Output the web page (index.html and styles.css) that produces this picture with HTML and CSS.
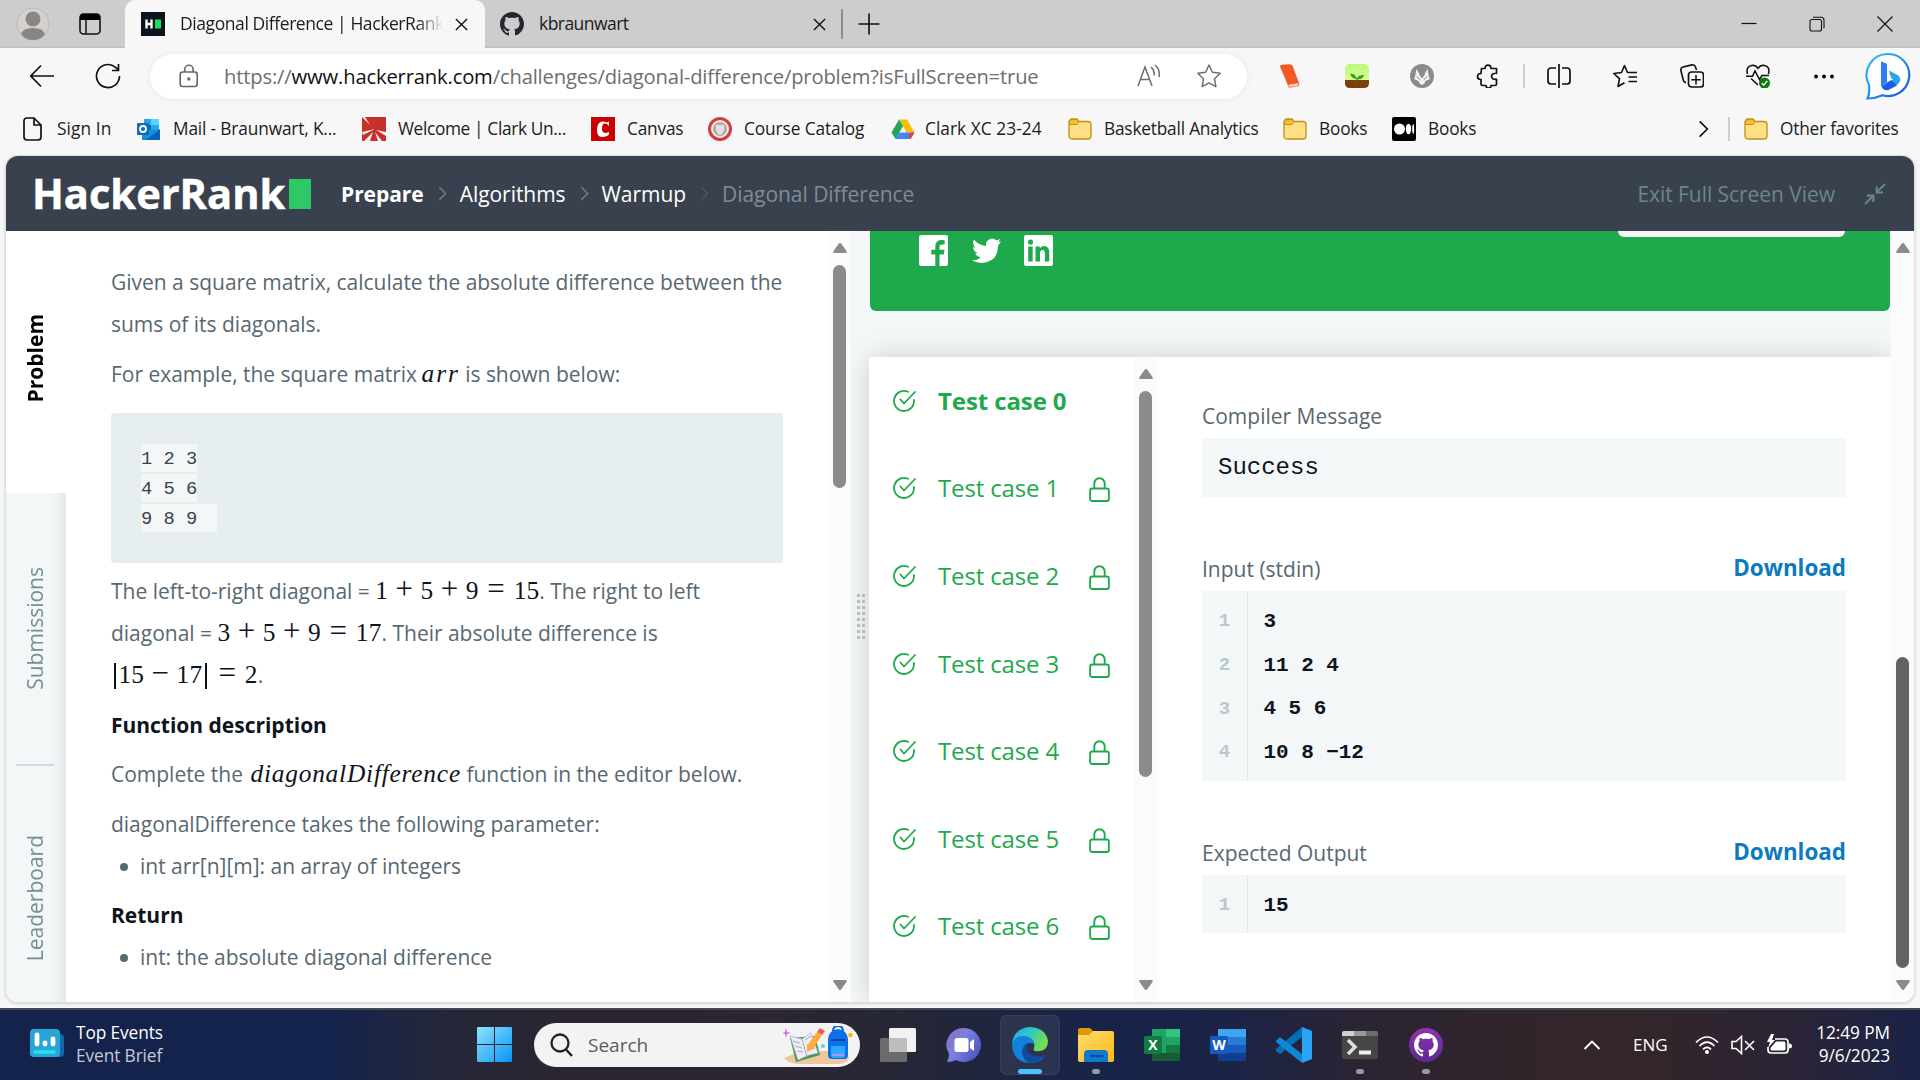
FILE: index.html
```
<!DOCTYPE html>
<html lang="en">
<head>
<meta charset="utf-8">
<title>Diagonal Difference | HackerRank</title>
<link rel="stylesheet" href="styles.css">
</head>
<body>
<svg class="defs" width="0" height="0">
  <defs>
    <symbol id="check" viewBox="0 0 24 24"><path d="M22 11v1a10 10 0 1 1-6-9.200M8.500 10.500l3.500 4L23 3" fill="none" stroke="currentColor" stroke-width="1.800" stroke-linecap="round"/></symbol>
    <symbol id="lock" viewBox="0 0 20 24"><rect x="1" y="11" width="18" height="12" rx="2" fill="none" stroke="currentColor" stroke-width="1.800"/><path d="M5 11V6.200a5 5 0 0 1 10 0V11" fill="none" stroke="currentColor" stroke-width="1.800"/></symbol>
    <symbol id="folder" viewBox="0 0 24 24"><path d="M1 5a3 3 0 0 1 3-3h5l2 2.500h9a3 3 0 0 1 3 3V19a3 3 0 0 1-3 3H4a3 3 0 0 1-3-3z" fill="#ffdf83" stroke="#c1901a" stroke-width="1.300"/><path d="M1.500 7.500V5A2.500 2.500 0 0 1 4 2.600h5l2 2L9 7.500z" fill="#f5c22e" stroke="#c1901a" stroke-width="1"/></symbol>
    <symbol id="octocat" viewBox="0 0 16 16"><path fill="currentColor" d="M8 0C3.580 0 0 3.580 0 8c0 3.540 2.290 6.530 5.470 7.590.4.070.55-.17.55-.38 0-.19-.01-.82-.01-1.490-2.010.37-2.530-.49-2.690-.94-.09-.23-.48-.94-.82-1.130-.28-.15-.68-.52-.01-.53.63-.01 1.080.58 1.230.82.72 1.210 1.870.87 2.330.66.070-.52.28-.87.51-1.070-1.780-.2-3.640-.89-3.640-3.950 0-.87.31-1.590.82-2.150-.08-.2-.36-1.020.08-2.120 0 0 .67-.21 2.200.82.64-.18 1.320-.27 2-.27s1.360.09 2 .27c1.530-1.040 2.200-.82 2.200-.82.44 1.100.16 1.920.08 2.120.51.56.82 1.270.82 2.150 0 3.070-1.870 3.750-3.650 3.950.29.25.54.73.54 1.480 0 1.070-.01 1.930-.01 2.200 0 .21.15.46.55.38A8.010 8.010 0 0 0 16 8c0-4.420-3.580-8-8-8z"/></symbol>
    <symbol id="up" viewBox="0 0 14 10"><path d="M7 0q1 0 1.500 1L13.500 8q1 2-1 2h-11q-2 0-1-2L5.500 1Q6 0 7 0z" fill="#8b8b8b"/></symbol>
    <symbol id="down" viewBox="0 0 14 10"><path d="M7 10q1 0 1.500-1L13.500 2q1-2-1-2h-11q-2 0-1 2L5.500 9Q6 10 7 10z" fill="#8b8b8b"/></symbol>
    <symbol id="close" viewBox="0 0 14 14"><path d="M1 1l12 12M13 1L1 13" stroke="#111" stroke-width="1.500" fill="none"/></symbol>
    <symbol id="gt" viewBox="0 0 10 16"><path d="M1.500 1L8.500 8l-7 7" fill="none" stroke="currentColor" stroke-width="1.500"/></symbol>
    <linearGradient id="gEdge" x1="0" y1="0" x2="1" y2="0.400"><stop offset="0" stop-color="#2fa8e8"/><stop offset=".5" stop-color="#2fc5c9"/><stop offset="1" stop-color="#6fe04c"/></linearGradient>
    <linearGradient id="gWin" x1="0" y1="0" x2="1" y2="1"><stop offset="0" stop-color="#8ae3ff"/><stop offset="1" stop-color="#0a94f5"/></linearGradient>
    <linearGradient id="gBing" x1="0" y1="0" x2="1" y2="1"><stop offset="0" stop-color="#2fc8f3"/><stop offset="1" stop-color="#1c50d8"/></linearGradient>
    <linearGradient id="gChat" x1="0" y1="0" x2="1" y2="0.600"><stop offset="0" stop-color="#8f6bb5"/><stop offset=".5" stop-color="#7a82e0"/><stop offset="1" stop-color="#4e56c4"/></linearGradient>
    <linearGradient id="gFold" x1="0" y1="0" x2="1" y2="1"><stop offset="0" stop-color="#ffdb6b"/><stop offset="1" stop-color="#fbbb17"/></linearGradient>
    <linearGradient id="gSky" x1="0" y1="0" x2="0" y2="1"><stop offset="0" stop-color="#b9f97b"/><stop offset="1" stop-color="#f0fb9c"/></linearGradient>
    <linearGradient id="gHub" x1="0" y1="0" x2="0" y2="1"><stop offset="0" stop-color="#9232b0"/><stop offset="1" stop-color="#592a90"/></linearGradient>
  </defs>
</svg>

<div class="screen">
  <header class="tabstrip">
    <div class="profile"><svg width="34" height="34" viewBox="0 0 34 34"><circle cx="17" cy="17" r="16" fill="#d4d2cd" stroke="#bcb9b4"/><circle cx="17" cy="12" r="7.500" fill="#8a8683"/><path d="M5 27q2-6 12-6t12 6q-4 6-12 6T5 27z" fill="#8a8683"/></svg></div>
    <div class="spaces"><svg width="22" height="22" viewBox="0 0 22 22"><rect x="1" y="1" width="20" height="20" rx="3.500" fill="none" stroke="#111" stroke-width="1.600"/><path d="M1 7V4q0-3 3-3h14q3 0 3 3v3z"/><path d="M7 7v14" stroke="#111" stroke-width="1.500"/></svg></div>
    <div class="tab tab-active">
      <svg width="24" height="24" viewBox="0 0 24 24"><rect width="24" height="24" fill="#0e141e"/><path d="M5.500 7.500v9M10.500 7.500v9M5 12h6" stroke="#fff" stroke-width="2.400"/><rect x="14" y="7.500" width="6" height="9" fill="#1ee25f"/></svg>
      <span class="tab-title fade">Diagonal Difference | HackerRank</span>
      <svg width="13" height="13"><use href="#close"/></svg>
    </div>
    <div class="tab tab-idle">
      <svg class="hub" width="24" height="24"><use href="#octocat"/></svg>
      <span class="tab-title">kbraunwart</span>
      <svg width="13" height="13"><use href="#close"/></svg>
    </div>
    <div class="newtab"><svg width="22" height="22" viewBox="0 0 22 22"><path d="M11 .5v21M.5 11h21" stroke="#111" stroke-width="1.600"/></svg></div>
    <div class="wincontrols">
      <svg width="16" height="16" viewBox="0 0 16 16"><path d="M.5 7.500h15" stroke="#111" stroke-width="1.200"/></svg>
      <svg width="16" height="16" viewBox="0 0 16 16"><g fill="none" stroke="#111" stroke-width="1.100"><rect x="1" y="3.500" width="11.500" height="11.500" rx="2"/><path d="M4 1.200h8q3 0 3 3v8"/></g></svg>
      <svg width="16" height="16" viewBox="0 0 16 16"><path d="M.5.5l15 15M15.500.5l-15 15" stroke="#111" stroke-width="1.200"/></svg>
    </div>
  </header>

  <nav class="toolbar">
    <svg class="tb-back" width="24" height="24" viewBox="0 0 24 24"><path d="M24 12H1M11 1.500L.8 12 11 22.500" fill="none" stroke="#111" stroke-width="1.700"/></svg>
    <svg class="tb-reload" width="26" height="26" viewBox="0 0 26 26"><path d="M24.500 13a11.500 11.500 0 1 1-4-8.700L23 6.500M23.500 1v6.500H17" fill="none" stroke="#111" stroke-width="1.700"/></svg>
    <div class="address">
      <svg width="20" height="24" viewBox="0 0 20 24"><rect x="1.200" y="8" width="17" height="14.500" rx="2.500" fill="none" stroke="#666" stroke-width="1.600"/><path d="M5.700 8V5.500a4.200 4.200 0 0 1 8.400 0V8" fill="none" stroke="#666" stroke-width="1.600"/><circle cx="9.800" cy="15" r="1.700" fill="#666"/></svg>
      <span class="url">https://<b>www.hackerrank.com</b>/challenges/diagonal-difference/problem?isFullScreen=true</span>
      <svg class="read" width="24" height="24" viewBox="0 0 24 24"><g fill="none" stroke="#6f6f6f" stroke-width="1.500"><path d="M1 22L8 3l7 19M3.700 15.500h8.800M14 3q4 3.500 3 8.500M18 1q5.500 4.500 4 12"/></g></svg>
      <svg class="star" width="26" height="26" viewBox="0 0 26 26"><path d="M13 2l3.400 7.300 7.800 1-5.700 5.500 1.400 7.900L13 19.900l-6.900 3.800 1.400-7.900L1.800 10.300l7.800-1z" fill="none" stroke="#6f6f6f" stroke-width="1.500" stroke-linejoin="round"/></svg>
    </div>
    <div class="exts">
      <svg width="24" height="24" viewBox="0 0 24 24"><path d="M1 2.500Q1 1 3 .8L11 .2q2 0 2.500 1.500L20 19 9 21.500z" fill="#f15a24"/><path d="M9 20.500l10.500-1.500.5 2.500-10 2z" fill="#ffd9c8" stroke="#f15a24" stroke-width=".7"/></svg>
      <svg width="24" height="24" viewBox="0 0 24 24"><rect width="24" height="24" rx="5" fill="url(#gSky)"/><path d="M0 16h24v3q0 5-5 5H5q-5 0-5-5z" fill="#7b3f0c"/><path d="M12 17v-3" stroke="#3d9918" stroke-width="1.400"/><path d="M12 15q-5 0-7-5 5-1 7 5zM12 15q0-4 7-4-1 5-7 4z" fill="#3fa01b"/></svg>
      <svg width="24" height="24" viewBox="0 0 24 24"><circle cx="12" cy="12" r="12" fill="#8b8b8b"/><path d="M6.500 5l3 5h5l3-5 1.500 8 1 2-4.500 2-1 2.500L12 21l-2.500-1.500-1-2.500L4 15l1-2z" fill="#f2f2f2"/><path d="M9.500 10L12 14l2.500-4zM6.500 12.500l4 3.500M17.500 12.500l-4 3.500" fill="#8b8b8b" stroke="#8b8b8b"/></svg>
      <svg width="24" height="24" viewBox="0 0 24 24"><path d="M5.500 4.500H9q0-3.300 3-3.300t3 3.300h5.500v4.800q-5-.3-5 3t5 3v4.700q0 1.500-1.500 1.500h-4q0 2.500-2.500 2.500T10 21.500H6.500Q5 21.500 5 20v-4.500q-3.500 0-3.500-3T5 9.500z" fill="none" stroke="#111" stroke-width="1.700" stroke-linejoin="round"/></svg>
    </div>
    <i class="vline"></i>
    <div class="tools">
      <svg width="24" height="24" viewBox="0 0 24 24"><path d="M9 4H4Q1 4 1 7v10q0 3 3 3h5M15 4h5q3 0 3 3v10q0 3-3 3h-5M12 0v24" fill="none" stroke="#111" stroke-width="1.700"/></svg>
      <svg width="24" height="24" viewBox="0 0 24 24"><path d="M16 8.500h-1.500L11.500 1.500 8.500 8.500.8 9.500l5.700 5.200L5 22.500l6.500-3.800M15.500 8.500H24M15.500 13H24M15.500 17.500H24" fill="none" stroke="#111" stroke-width="1.600" stroke-linejoin="round"/></svg>
      <svg width="24" height="24" viewBox="0 0 24 24"><path d="M6 18.500q-2 0-2.700-2.500L1 7q-.8-3 2-4L12 .9q2.500-.5 3.500 2L16.500 6" fill="none" stroke="#111" stroke-width="1.600"/><rect x="8.500" y="8" width="15" height="15" rx="3" fill="none" stroke="#111" stroke-width="1.700"/><path d="M16 11v9.500M11.200 15.700h9.600" stroke="#111" stroke-width="1.500"/></svg>
      <svg width="24" height="24" viewBox="0 0 24 24"><path d="M1.500 10Q-.5 2 6.500 1.300q3.500 0 5.500 3 2-3 5.500-3Q24.500 2 22.500 10M5 14.500l7 6.500M0 12.300h6.500L9 7l4.500 8.500 2.500-4h7" fill="none" stroke="#111" stroke-width="1.600"/><circle cx="18.500" cy="19" r="5.500" fill="#0f7b0f"/><path d="M15.800 19.200l2 1.800 3.400-4" fill="none" stroke="#fff" stroke-width="1.300"/></svg>
      <svg width="24" height="24" viewBox="0 0 24 24"><circle cx="4" cy="12.500" r="1.900"/><circle cx="12" cy="12.500" r="1.900"/><circle cx="20" cy="12.500" r="1.900"/></svg>
    </div>
    <svg class="bing" width="46" height="48" viewBox="0 0 46 48"><path d="M23.500 2a21 21 0 1 1-6 41.200Q10 46.500 2.500 46.500 5 42 4 33A21.200 21.200 0 0 1 23.500 2z" fill="#fff" stroke="url(#gBing)" stroke-width="2.200"/><path d="M16 9.500l6 2.200V30l-5.500 4.500q-1-.5-.5-2z" fill="#2f7fec"/><path d="M24 18.500l9.500 5q4 5-1 9l-9 5q-5 1-6.500-3l9-5.500 2-1-2.200-2.500z" fill="#2ba4ee"/><path d="M16.500 34.500l6-4.500 4-2 5.500 5.500-8.500 4.500q-4.500 1.500-7-3.500z" fill="#1c5fe0"/></svg>
  </nav>

  <nav class="bookmarks">
    <a><svg width="24" height="24" viewBox="0 0 24 24"><path d="M3 4q0-3 3-3h7l7 7v12q0 3-3 3H6q-3 0-3-3zM13 1v7h7" fill="none" stroke="#111" stroke-width="1.700"/></svg><span>Sign In</span></a>
    <a><svg width="24" height="24" viewBox="0 0 24 24"><path d="M7 2h15v12H7z" fill="#28a8ea"/><path d="M14 2h8v6h-8z" fill="#50d9ff"/><path d="M7 8h7v6H7z" fill="#0364b8"/><path d="M5 12l18 1v10H5z" fill="#1490df"/><path d="M23 12L9 23h14z" fill="#0a62b8"/><rect y="6" width="12" height="12" rx="1" fill="#0f6cbd"/><circle cx="6" cy="12" r="3" fill="none" stroke="#fff" stroke-width="1.800"/></svg><span>Mail - Braunwart, K...</span></a>
    <a><svg width="24" height="24" viewBox="0 0 24 24"><rect width="24" height="24" fill="#c9302c"/><path d="M0 15l13-3-12 6zM2 24l9-9-3 9zM13 15l3 9h4zM14 13l10 6v-4zM0 0l8 8-5-8z" fill="#f7eeee"/></svg><span>Welcome | Clark Un...</span></a>
    <a><svg width="24" height="24" viewBox="0 0 24 24"><rect width="24" height="24" fill="#c00"/><path d="M18 9V4.500l-2 1Q7 1.500 6 12t10 7l2-1.500v-2.500q-7 3-7-3.500T16 7z" fill="#fff"/></svg><span>Canvas</span></a>
    <a><svg width="24" height="24" viewBox="0 0 24 24"><circle cx="12" cy="12" r="10.500" fill="#eee" stroke="#d33c40" stroke-width="3"/><circle cx="12" cy="12" r="7" fill="#b9aaa6"/><path d="M8 8h8v5q-1 4-4 5-3-1-4-5z" fill="#e8e1de"/></svg><span>Course Catalog</span></a>
    <a><svg width="24" height="24" viewBox="0 0 24 24"><path d="M8 2.500h8l7.500 13h-8z" fill="#fbbc04"/><path d="M8 2.500L.5 15.500l4 6.500L12 9z" fill="#22a45a"/><path d="M8 15.500h15.500l-4 6.500h-15z" fill="#4285f4"/><path d="M19.500 15.500h4l-4 6.500-2.500-3z" fill="#ea4335"/></svg><span>Clark XC 23-24</span></a>
    <a><svg width="24" height="24"><use href="#folder"/></svg><span>Basketball Analytics</span></a>
    <a><svg width="24" height="24"><use href="#folder"/></svg><span>Books</span></a>
    <a><svg width="24" height="24" viewBox="0 0 24 24"><rect width="24" height="24" rx="2"/><g fill="#fff"><circle cx="7.500" cy="12" r="5.500"/><ellipse cx="16.500" cy="12" rx="2.700" ry="5.200"/><ellipse cx="21.200" cy="12" rx="1" ry="4.700"/></g></svg><span>Books</span></a>
    <svg class="more" width="11" height="18"><use href="#gt"/></svg>
    <i class="vline"></i>
    <a><svg width="24" height="24"><use href="#folder"/></svg><span>Other favorites</span></a>
  </nav>

  <main class="page">
    <header class="hr-head">
      <div class="logo"><span>HackerRank</span><i></i></div>
      <div class="crumbs">
        <b>Prepare</b><svg width="9" height="15"><use href="#gt"/></svg>
        <span>Algorithms</span><svg width="9" height="15"><use href="#gt"/></svg>
        <span>Warmup</span><svg class="dim" width="9" height="15"><use href="#gt"/></svg>
        <span class="here">Diagonal Difference</span>
      </div>
      <div class="exit"><span>Exit Full Screen View</span><svg width="22" height="22" viewBox="0 0 22 22"><path d="M21 1l-7 7M1 21l7-7" fill="none" stroke="currentColor" stroke-width="1.800"/><path d="M12.700 3.500v6H19M3 12.700h6.300V19" fill="none" stroke="currentColor" stroke-width="2.200"/></svg></div>
    </header>

    <div class="hr-body">
      <aside class="sidetabs">
        <div class="stab on"><span>Problem</span></div>
        <div class="stab"><span>Submissions</span></div>
        <i></i>
        <div class="stab last"><span>Leaderboard</span></div>
      </aside>

      <section class="statement">
        <p>Given a square matrix, calculate the absolute difference between the<br>sums of its diagonals.</p>
        <p>For example, the square matrix <em class="arr">arr</em> is shown below:</p>
        <pre class="sample"><code>1 2 3</code>
<code>4 5 6</code>
<code class="last">9 8 9 </code></pre>
        <p>The left-to-right diagonal = <span class="math">1<i>+</i>5<i>+</i>9<i class="eq">=</i>15</span>. The right to left<br>diagonal = <span class="math">3<i>+</i>5<i>+</i>9<i class="eq">=</i>17</span>. Their absolute difference is<br><span class="math"><s></s>15<i>−</i>17<s></s><i class="eq">=</i>2</span>.</p>
        <h4>Function description</h4>
        <p>Complete the <em class="fn">diagonalDifference</em> function in the editor below.</p>
        <p>diagonalDifference takes the following parameter:</p>
        <ul><li>int arr[n][m]: an array of integers</li></ul>
        <h4>Return</h4>
        <ul><li>int: the absolute diagonal difference</li></ul>
      </section>
      <div class="scroll scroll-left"><svg width="14" height="10"><use href="#up"/></svg><i></i><svg class="end" width="14" height="10"><use href="#down"/></svg></div>

      <div class="splitter"><i></i></div>

      <section class="results">
        <div class="banner">
          <div class="social">
            <svg width="29" height="31" viewBox="0 0 29 31"><path d="M2 0h25q2 0 2 2v27q0 2-2 2h-6.500V19.500h4.300l.7-4.700h-5v-3q0-2.300 2.300-2.300h2.900V5.300q-8.900-1.500-9.400 5.700v3.800h-4v4.700h4V31H2q-2 0-2-2V2q0-2 2-2z" fill="#fff"/></svg>
            <svg width="29" height="25" viewBox="0 0 29 25"><path d="M29 3q-1.500.9-3.300 1.100Q27.500 2.800 28 1q-1.700 1-3.700 1.400A6 6 0 0 0 14.200 8Q6.500 7.500 2 1.600-.5 6.500 3.800 9.900q-1.400 0-2.700-.8.200 4.800 4.800 6-1.300.3-2.700.1 1.300 3.700 5.600 4.200Q5 22.600 0 22q4 3 9.300 3 16.800-.8 16.800-17.600 1.900-1.800 2.900-4.400z" fill="#fff"/></svg>
            <svg width="29" height="31" viewBox="0 0 29 31"><path fill-rule="evenodd" d="M2 0h25q2 0 2 2v27q0 2-2 2H2q-2 0-2-2V2q0-2 2-2zM4.200 11.500v15h4.500v-15zM6.500 4.500a2.600 2.600 0 1 0 0 5.200 2.600 2.600 0 0 0 0-5.200zM11.500 11.500v15H16v-8q0-3.500 2.500-3.500t2.400 3.500v8h4.400V18q0-7-5.300-7-2.800 0-4.200 2.500v-2z" fill="#fff"/></svg>
          </div>
          <div class="next"></div>
        </div>
        <div class="card">
          <ul class="cases">
            <li class="sel"><svg width="24" height="24"><use href="#check"/></svg><span>Test case 0</span></li>
            <li><svg width="24" height="24"><use href="#check"/></svg><span>Test case 1</span><svg class="lk" width="21" height="25"><use href="#lock"/></svg></li>
            <li><svg width="24" height="24"><use href="#check"/></svg><span>Test case 2</span><svg class="lk" width="21" height="25"><use href="#lock"/></svg></li>
            <li><svg width="24" height="24"><use href="#check"/></svg><span>Test case 3</span><svg class="lk" width="21" height="25"><use href="#lock"/></svg></li>
            <li><svg width="24" height="24"><use href="#check"/></svg><span>Test case 4</span><svg class="lk" width="21" height="25"><use href="#lock"/></svg></li>
            <li><svg width="24" height="24"><use href="#check"/></svg><span>Test case 5</span><svg class="lk" width="21" height="25"><use href="#lock"/></svg></li>
            <li><svg width="24" height="24"><use href="#check"/></svg><span>Test case 6</span><svg class="lk" width="21" height="25"><use href="#lock"/></svg></li>
          </ul>
          <div class="scroll scroll-cases"><svg width="14" height="10"><use href="#up"/></svg><i></i><svg class="end" width="14" height="10"><use href="#down"/></svg></div>
          <div class="detail">
            <div class="label"><span>Compiler Message</span></div>
            <div class="box msg">Success</div>
            <div class="label"><span>Input (stdin)</span><a>Download</a></div>
            <div class="box lines">
              <div><i>1</i><b>3</b></div>
              <div><i>2</i><b>11 2 4</b></div>
              <div><i>3</i><b>4 5 6</b></div>
              <div><i>4</i><b>10 8 −12</b></div>
            </div>
            <div class="label"><span>Expected Output</span><a>Download</a></div>
            <div class="box lines"><div><i>1</i><b>15</b></div></div>
          </div>
        </div>
      </section>
      <div class="scroll scroll-right"><svg width="14" height="10"><use href="#up"/></svg><i></i><svg class="end" width="14" height="10"><use href="#down"/></svg></div>
    </div>
  </main>

  <footer class="taskbar">
    <div class="widget">
      <svg width="34" height="29" viewBox="0 0 34 29"><rect x="8" y="5" width="26" height="23" rx="4" fill="#1668ae"/><rect width="30" height="28" rx="4" fill="#2aa3d6"/><path d="M7 6v9M15 14v1M23 10v5" stroke="#fff" stroke-width="4.800" stroke-linecap="round"/><path d="M5 23h19" stroke="#22e3ee" stroke-width="3.400" stroke-linecap="round"/></svg>
      <div><span>Top Events</span><span class="sub">Event Brief</span></div>
    </div>
    <svg class="start" width="35" height="35" viewBox="0 0 35 35"><path d="M0 1q0-1 1-1h16v17H0zM18 0h16q1 0 1 1v16H18zM0 18h17v17H1q-1 0-1-1zM18 18h17v16q0 1-1 1H18z" fill="url(#gWin)"/></svg>
    <div class="search">
      <svg width="23" height="24" viewBox="0 0 23 24"><circle cx="10" cy="10" r="8.500" fill="none" stroke="#222" stroke-width="2.300"/><path d="M16 16.500l6 6.500" stroke="#222" stroke-width="2.500"/></svg>
      <span>Search</span>
      <svg class="art" width="70" height="38" viewBox="0 0 70 38"><path d="M1 32l17-7h46l2 7q-3 6-12 6H18Q6 38 1 32z" fill="#f0c69a"/><path d="M7 12l25-2 5 19-24 7z" fill="#3d9a50"/><path d="M7 10l12 3 9-6 7 20-9 2-11 5z" fill="#eeecf5" stroke="#b5b0d2" stroke-width=".7"/><path d="M19 13l5 18M10 15l7 2M12 20l7 2M14 25l6 1M22 14l6-4M24 19l6-3M26 24l6-2" stroke="#aaa6c9"/><path d="M24 20l10-14 5 3-9 14-6 3z" fill="#ffad33"/><path d="M34 6l3-4 5 3-3 4z" fill="#ef5d57"/><path d="M45 13q1-9 10-10 9 1 10 10v16q0 4-4 4H49q-4 0-4-4z" fill="#0b70e8"/><path d="M50 5q0-5 5-5t5 5" fill="none" stroke="#0960cd" stroke-width="2"/><path d="M48 20h14v9q0 3-3 3h-8q-3 0-3-3z" fill="#2aaaff"/><path d="M48 14h14" stroke="#0648a8" stroke-width="2"/><path d="M49 29h12" stroke="#b88df5" stroke-width="2"/><path d="M3 2l1 4 4 1-4 1-1 4-1-4-3-1 3-1z" fill="#d970ef"/><circle cx="40" cy="20" r="2" fill="#4dd5ee"/><circle cx="67.500" cy="9" r="2.300" fill="#ffb21c"/></svg>
    </div>
    <div class="apps">
      <div><svg width="36" height="36" viewBox="0 0 36 36"><rect y="11" width="27" height="24" rx="1.500" fill="#6b6b6d"/><rect x="9" y="1" width="27" height="24" rx="1.500" fill="#f2f2f2"/><path d="M9 11h18v14H9z" fill="#bdbdbd"/></svg></div>
      <div><svg width="36" height="36" viewBox="0 0 36 36"><path d="M18 1a17 17 0 1 1-8 32q-4 2-9 2 2-4 2-8A17 17 0 0 1 18 1z" fill="url(#gChat)"/><rect x="8.500" y="11" width="14" height="14" rx="2.500" fill="#fff"/><path d="M24 15l4-3v12l-4-3z" fill="#fff"/></svg></div>
      <div class="cur"><svg width="36" height="36" viewBox="0 0 36 36"><path d="M0 17Q2 1 18 0q16 1 18 14 0 9-8 10-8 1-6-3 2-8-7-11Q5 8 0 17z" fill="url(#gEdge)"/><path d="M0 18Q2 9 11 9q9 0 11 8-7-3-9 4-1 7 5 11 6 3 15-2-6 6-15 6Q1 35 0 18z" fill="#1181dc"/><path d="M15.500 16q-3 7 2.500 11t15 1q-5 8-15 8-8-3-8-12 1-6 5.500-8z" fill="#124c9c"/></svg><u></u></div>
      <div><svg width="36" height="36" viewBox="0 0 36 36"><path d="M0 3q0-2 2-2h10l3 3v6H0z" fill="#dc9a06"/><path d="M0 8h11l4-4h19q2 0 2 2v27q0 2-2 2H2q-2 0-2-2z" fill="url(#gFold)"/><path d="M6 35v-8q0-4 4-4h16q4 0 4 4v8z" fill="#1377ca"/><path d="M12 29h13" stroke="#0b4e91" stroke-width="2"/></svg><u></u></div>
      <div><svg width="36" height="36" viewBox="0 0 36 36"><path d="M8 2h28v32H8z" fill="#21a366"/><path d="M22 2h14v8H22z" fill="#33c481"/><path d="M22 18h14v8H22z" fill="#107c41"/><path d="M8 26h28v8H8z" fill="#185c37"/><rect y="9" width="18" height="18" rx="1.500" fill="#107c41"/></svg><b>X</b></div>
      <div><svg width="36" height="36" viewBox="0 0 36 36"><path d="M8 2h28v8H8z" fill="#41a5ee"/><path d="M8 10h28v8H8z" fill="#2b7cd3"/><path d="M8 18h28v8H8z" fill="#185abd"/><path d="M8 26h28v8H8z" fill="#103f91"/><rect y="9" width="18" height="18" rx="1.500" fill="#185abd"/></svg><b>W</b></div>
      <div><svg width="36" height="36" viewBox="0 0 36 36"><path d="M26 0v10L4 27l-4-3v-2z" fill="#0070b8"/><path d="M0 14l4-4 22 17v9L0 15z" fill="#1087d2"/><path d="M26 0l10 4v28l-10 4z" fill="#2aa5f3"/></svg></div>
      <div><svg width="36" height="36" viewBox="0 0 36 36"><rect y="4" width="36" height="28" rx="2" fill="#464646"/><path d="M0 6q0-2 2-2h10v5H0z" fill="#d0d0d0"/><path d="M12 4h12v5H12z" fill="#9a9a9a"/><path d="M24 4h10q2 0 2 2v3H24z" fill="#6c6c6c"/><path d="M6 13l7 7-7 7" fill="none" stroke="#dedede" stroke-width="3.500"/><path d="M17 25.500h12" stroke="#efefef" stroke-width="4"/></svg><u></u></div>
      <div class="ghd"><svg width="36" height="36" viewBox="0 0 36 36"><circle cx="18" cy="18" r="17" fill="url(#gHub)"/><use href="#octocat" x="6" y="6" width="24" height="24"/></svg><u></u></div>
    </div>
    <div class="tray">
      <svg class="chev" width="18" height="12" viewBox="0 0 18 12"><path d="M1.500 10L9 2.500l7.500 7.500" fill="none" stroke="#fff" stroke-width="1.800"/></svg>
      <span class="lang">ENG</span>
      <svg width="24" height="20" viewBox="0 0 24 20"><path d="M1 7.500q11-11 22 0M4.500 11q7.500-7.500 15 0M8 14.300q4-4 8 0" fill="none" stroke="#fff" stroke-width="1.700"/><circle cx="12" cy="17" r="2" fill="#fff"/></svg>
      <svg class="mute" width="24" height="20" viewBox="0 0 24 20"><path d="M1 6.500h4l5.500-5v17l-5.500-5H1zM14 6l9 9M23 6l-9 9" fill="none" stroke="#fff" stroke-width="1.600"/></svg>
      <svg class="batt" width="26" height="22" viewBox="0 0 26 22"><path d="M9 5h10q3 0 3 3v8q0 3-3 3H5q-3 0-3-3v-3" fill="none" stroke="#fff" stroke-width="1.700"/><path d="M10 7.500h8q1.500 0 1.500 1.500v6q0 1.500-1.500 1.500H6q-1.500 0-1.500-1.500v-1z" fill="#fff"/><path d="M23 9.500q3 0 3 2.500t-3 2.500zM5 0L1 8h3l-2 6 7-8H6l2-6z" fill="#fff"/></svg>
      <div class="clock"><span>12:49 PM</span><span>9/6/2023</span></div>
    </div>
  </footer>
</div>
</body>
</html>
```
FILE: styles.css
```
* { box-sizing: border-box; }
body { margin: 0; font-family: "Open Sans", "Noto Sans", sans-serif; background: #f7f7f7; }
svg { display: block; flex: none; }
.defs { position: absolute; }
ul, p, h4, pre { margin: 0; padding: 0; }
.screen { width: 1920px; height: 1080px; overflow: hidden; display: flex; flex-direction: column; }
.screen span, .screen b, .screen a { white-space: nowrap; }
.vline { flex: none; width: 2px; height: 24px; background: #cfcfcf; }

/* browser tab strip */
.tabstrip { height: 48px; flex: none; display: flex; align-items: center; background: #cdcdcd; box-shadow: inset 0 -2px 2px -1px #b8b8b8; }
.profile { width: 79px; padding-left: 16px; }
.spaces { width: 46px; }
.tab { height: 48px; display: flex; align-items: center; font-size: 17.5px; letter-spacing: -.42px; color: #1b1b1b; }
.tab-active { width: 360px; padding-left: 16px; background: #f7f7f7; border-radius: 10px 10px 0 0; }
.tab-idle { width: 358px; padding-left: 15px; border-right: 2px solid #8c8c8c; height: 30px; }
.tab-title { margin-left: 15px; width: 263px; overflow: hidden; padding-bottom: 2px; }
.tab-active svg:last-child { margin-left: 12px; }
.tab-idle .tab-title { width: 274px; letter-spacing: -.55px; }
.fade { -webkit-mask-image: linear-gradient(90deg, #000 90%, transparent); mask-image: linear-gradient(90deg, #000 90%, transparent); }
.hub { color: #24292f; }
.newtab { padding-left: 15px; }
.wincontrols { margin-left: auto; display: flex; gap: 52px; padding-right: 27px; }

/* address row */
.toolbar { height: 57px; flex: none; display: flex; align-items: center; padding: 0 0 1px 30px; }
.tb-reload { margin-left: 41px; }
.address { flex: none; margin-left: 29px; width: 1097px; height: 45px; border-radius: 23px; background: #fff; display: flex; align-items: center; padding-left: 29px; box-shadow: 0 0 6px rgba(0, 0, 0, .07); }
.url { margin-left: 25px; width: 890px; font-size: 20.2px; letter-spacing: -.16px; color: #6e6e6e; }
.url b { font-weight: 400; color: #111; }
.read { margin-left: 23px; }
.star { margin-left: 35px; }
.exts { flex: none; display: flex; gap: 41.500px; margin-left: 32px; width: 244px; }
.tools { flex: none; display: flex; gap: 42.300px; margin-left: 22px; width: 318px; }

/* favourites row */
.bookmarks { height: 48px; flex: none; display: flex; align-items: center; padding: 0 0 1px 21px; }
.bookmarks a { display: flex; align-items: center; gap: 12px; font-size: 17.3px; letter-spacing: -.2px; color: #1b1b1b; flex: none; }
.bookmarks a:nth-child(1) { width: 116px; letter-spacing: .1px; }
.bookmarks a:nth-child(2) { width: 225px; letter-spacing: -.15px; }
.bookmarks a:nth-child(3) { width: 229px; letter-spacing: -.35px; }
.bookmarks a:nth-child(4) { width: 117px; }
.bookmarks a:nth-child(5) { width: 183px; letter-spacing: -.1px; }
.bookmarks a:nth-child(6) { width: 177px; letter-spacing: .05px; gap: 10px; }
.bookmarks a:nth-child(7) { width: 215px; }
.bookmarks a:nth-child(8) { width: 109px; }
.bookmarks a:nth-child(9) { width: 306px; }
.more { color: #111; }
.bookmarks .vline { margin: 0 14px 0 19px; }

/* web page */
.page { flex: none; height: 846px; margin: 3px 6px 0; width: 1908px; border-radius: 12px; overflow: hidden; background: #fff; box-shadow: 0 0 0 1px #dedede, 0 1px 3px 1px #d0d0d0; }
.hr-head { height: 75px; background: #3a414e; display: flex; align-items: center; padding: 0 28px 0 26px; font-size: 21px; color: #fff; }
.logo { display: flex; align-items: center; width: 309px; }
.logo span { font-weight: 700; font-size: 41.600px; line-height: 75px; width: 257px; -webkit-text-stroke: .5px #fff; }
.logo i { width: 22px; height: 30px; background: #2ec866; }
.crumbs { display: flex; align-items: center; color: #fff; letter-spacing: -.05px; }
.crumbs svg { color: #71808c; margin: 0 13px 0 14px; }
.crumbs svg.dim { color: #4c5a68; }
.crumbs .here { color: #7f8c96; }
.exit { margin-left: auto; display: flex; align-items: center; gap: 29px; color: #69878b; letter-spacing: -.05px; }
.hr-body { display: flex; height: 771px; }

.sidetabs { width: 60px; flex: none; display: flex; flex-direction: column; background: linear-gradient(90deg, #f3f7f7 75%, #e3e9ea); align-items: stretch; }
.stab { display: flex; align-items: center; justify-content: center; flex: none; height: 270px; padding-right: 2px; font-size: 21px; color: #738f93; }
.stab.on { height: 262px; padding-bottom: 7px; background: #fff; color: #000; font-weight: 700; }
.stab.last { padding-bottom: 5px; }
.stab span { writing-mode: vertical-rl; transform: rotate(180deg); }
.sidetabs i { flex: none; height: 2px; margin: 1px 12px 0 10px; background: #cfdcdf; }

.statement { width: 762px; flex: none; padding: 30px 0 0 45px; font-size: 21px; letter-spacing: -.015px; line-height: 42px; color: #576871; white-space: nowrap; }
.statement p, .statement h4 { margin-bottom: 7.500px; }
.statement h4 { font-size: 21px; color: #0e141e; }
.statement ul { list-style: none; padding-left: 30px; margin-bottom: 7.500px; }
.statement p:has(+ ul) { margin-bottom: 0; }
.statement h4:has(+ ul) { margin-bottom: 0; }
.statement li { display: flex; align-items: center; }
.statement li::before { content: ""; width: 8px; height: 8px; border-radius: 50%; background: #576871; margin: 2px 12px 0 -21px; }
.statement em, .math { font-family: "Liberation Serif", serif; font-size: 25.400px; line-height: 1; color: #0e141e; }
.statement em.arr { letter-spacing: 1.900px; margin: 0 0 0 -1px; }
.statement em.fn { letter-spacing: .78px; margin-left: 2px; }
.math { letter-spacing: .15px; }
.math i { display: inline-block; width: 32.400px; text-align: center; font-style: normal; font-size: 31px; line-height: 20px; }
.math i.eq { width: 35px; }
.math s { display: inline-block; width: 1.500px; height: 26px; background: #0e141e; margin: 0 3px; vertical-align: -6px; }
.sample { margin: 18.500px 0 7px; height: 150px; width: 672px; border-radius: 3px; background: #e7eeef; padding: 30px; font: 18.750px/30px "Liberation Mono", monospace; letter-spacing: 0; color: #39424e; }
.sample code { font: inherit; background: #f3f7f7; padding: 4px 0 2px; position: relative; top: 1px; }
.sample .last { padding-right: 8px; }

.scroll { flex: none; display: flex; flex-direction: column; align-items: center; background: #fbfbfb; padding: 12px 0; }
.scroll i { width: 13px; border-radius: 7px; background: #8b8b8b; margin-top: 12px; }
.scroll .end { margin-top: auto; }
.scroll-left { width: 23px; }
.scroll-left i { height: 223px; }
.scroll-cases { width: 23px; height: 645px; }
.scroll-cases i { height: 386px; }
.scroll-right { width: 23px; }
.scroll-right i { height: 311px; margin-top: 404px; background: #636363; }

.splitter { width: 18px; flex: none; padding: 363px 0 0 6px; background: #f3f7f7; }
.splitter i { display: block; width: 9px; height: 46px; background: conic-gradient(transparent 25%, transparent 0 75%, #bcc4c4 0) 0 0 / 4.500px 6px; background: linear-gradient(#f3f7f7 0 0) 0 0 / 0 0, repeating-linear-gradient(90deg, #bfc6c6 0 3px, transparent 3px 5px); -webkit-mask-image: repeating-linear-gradient(#000 0 3px, transparent 3px 6px); mask-image: repeating-linear-gradient(#000 0 3px, transparent 3px 6px); }

.results { width: 1022px; flex: none; display: flex; flex-direction: column; background: #f3f7f7; }
.banner { height: 80px; margin: 0 1px 46px; flex: none; background: #1ea94c; border-radius: 0 0 6px 6px; display: flex; justify-content: space-between; padding: 4px 45px 0 49px; }
.social { display: flex; align-items: flex-start; gap: 23.500px; }
.social svg:nth-child(2) { margin-top: 3px; }
.next { width: 227px; height: 6px; margin-top: -4px; border-radius: 0 0 6px 6px; background: #f6f6f6; }
.card { flex: none; height: 645px; display: flex; background: #fff; box-shadow: 0 0 24px rgba(0, 0, 0, .16); clip-path: inset(-40px 0 0 -18px); position: relative; }
.cases { list-style: none; width: 265px; }
.cases li { height: 87.600px; display: flex; align-items: center; padding-left: 23px; color: #1ea94c; font-size: 24px; letter-spacing: -.15px; }
.cases span { margin-left: 22px; width: 151px; padding-bottom: 1px; }
.cases .sel { font-weight: 700; letter-spacing: -.1px; }
.cases .lk { margin-top: 3px; }
.detail { width: 734px; padding: 0 45px; font-size: 21px; }
.label { display: flex; justify-content: space-between; align-items: flex-end; height: 81px; padding-bottom: 7px; line-height: 30px; color: #576871; }
.label a { color: #0b7abf; font-weight: 700; font-size: 22.400px; padding-bottom: 1px; }
.box { background: #f3f7f7; font-family: "Liberation Mono", monospace; color: #0e141e; }
.msg { height: 59px; line-height: 60px; padding-left: 16px; font-size: 24px; margin-bottom: 13px; }
.lines { padding: 8.500px 0 6.500px; background: linear-gradient(90deg, transparent 45px, #e4eaeb 45px 46px, transparent 46px) #f3f7f7; font-size: 21px; }
.lines + .label { height: 94px; }
.lines div { display: flex; height: 43.700px; align-items: center; }
.lines i { width: 45px; text-align: center; font-style: normal; font-weight: 700; color: #b7c9cc; font-size: 19px; }
.lines b { padding-left: 16.500px; letter-spacing: -.05px; }

/* taskbar */
.taskbar { flex: none; height: 72px; margin-top: 6px; border-top: 2px solid #434754; display: flex; align-items: center; color: #fff; padding: 0 0 1px 30px;
  background: linear-gradient(90deg, #14234c 0, #14234c 330px, #25273a 440px, #2a2530 560px, #2c2630 760px, #262737 900px, #172349 1100px, #1b2346 1230px, #2b2433 1360px, #31252c 1500px, #33262a 1640px, #2c2434 1780px, #1b2247 1920px); }
.widget { display: flex; align-items: center; width: 447px; gap: 12px; }
.widget svg { margin-top: -3px; }
.widget span, .clock span { display: block; font-size: 17.300px; line-height: 23px; letter-spacing: -.1px; }
.widget > div, .clock { padding-bottom: 2px; }
.widget .sub { color: #c5c9d6; }
.search { margin-left: 22px; width: 326px; height: 44px; border-radius: 22px; background: #f3f3f3; display: flex; align-items: center; padding: 0 7px 0 16px; color: #5c5c5c; font-size: 19px; }
.search span { margin-left: 15px; }
.search .art { margin-left: auto; }
.apps { display: flex; margin-left: 5px; }
.apps div { width: 66px; height: 60px; position: relative; display: flex; justify-content: center; align-items: center; }
.apps .cur { width: 60px; margin: 0 3px; border-radius: 7px; background: rgba(255, 255, 255, .07); box-shadow: inset 0 0 0 1px rgba(255, 255, 255, .06); }
.apps u { position: absolute; bottom: 1px; left: calc(50% - 4px); width: 8px; height: 5px; border-radius: 3px; background: #9a9aa3; }
.apps .cur u { width: 24px; left: 18px; background: #4cc2ff; }
.apps b { position: absolute; left: 15px; top: 21px; width: 18px; text-align: center; font-size: 14px; line-height: 18px; }
.ghd svg { color: #fff; }
.tray { margin-left: auto; display: flex; align-items: center; padding-right: 30px; }
.chev { margin-right: 32px; }
.lang { font-size: 17px; width: 62px; padding-bottom: 1px; }
.mute { margin: 0 11px 0 12px; }
.clock { width: 98px; text-align: right; }
```
